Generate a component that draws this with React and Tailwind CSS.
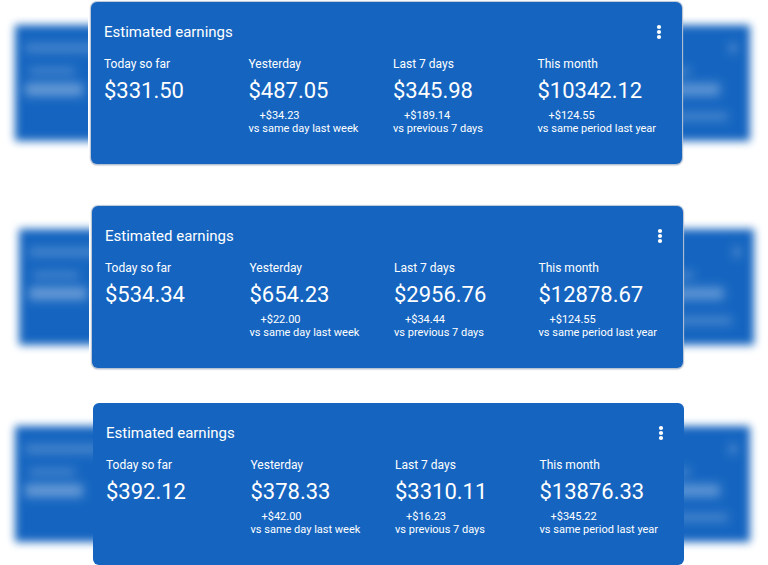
import { clsx } from "clsx";

const reports = [
  {
    id: "first",
    section: "mt-[2px] pl-[91px] pr-[86px]",
    backdrop: "left-[15px] right-[18px]",
    edge: true,
    stats: [
      { label: "Today so far", amount: "$331.50" },
      { label: "Yesterday", amount: "$487.05", change: "+$34.23", note: "vs same day last week" },
      { label: "Last 7 days", amount: "$345.98", change: "+$189.14", note: "vs previous 7 days" },
      { label: "This month", amount: "$10342.12", change: "+$124.55", note: "vs same period last year" },
    ],
  },
  {
    id: "second",
    section: "mt-[42px] pl-[92px] pr-[85px]",
    backdrop: "left-[19px] right-[14px]",
    edge: true,
    stats: [
      { label: "Today so far", amount: "$534.34" },
      { label: "Yesterday", amount: "$654.23", change: "+$22.00", note: "vs same day last week" },
      { label: "Last 7 days", amount: "$2956.76", change: "+$34.44", note: "vs previous 7 days" },
      { label: "This month", amount: "$12878.67", change: "+$124.55", note: "vs same period last year" },
    ],
  },
  {
    id: "third",
    section: "mt-[35px] pl-[93px] pr-[84px]",
    backdrop: "left-[15px] right-[18px]",
    edge: false,
    stats: [
      { label: "Today so far", amount: "$392.12" },
      { label: "Yesterday", amount: "$378.33", change: "+$42.00", note: "vs same day last week" },
      { label: "Last 7 days", amount: "$3310.11", change: "+$16.23", note: "vs previous 7 days" },
      { label: "This month", amount: "$13876.33", change: "+$345.22", note: "vs same period last year" },
    ],
  },
];

function Backdrop({ className }) {
  return (
    <div
      aria-hidden="true"
      className={clsx("absolute top-[23px] bottom-[23px] flex justify-between bg-[#1565c0] blur-[4px]", className)}
    >
      <div className="flex flex-col items-start pt-[18px] pl-[10px] blur-[2px]">
        <div className="h-[10px] w-[90px] bg-white/20" />
        <div className="mt-[14px] ml-1 h-[8px] w-[46px] bg-white/20" />
        <div className="mt-2 h-[13px] w-[58px] bg-white/35" />
      </div>
      <div className="flex flex-col items-end pt-[18px] pr-[22px] blur-[2px]">
        <div className="-mr-2 h-[10px] w-[6px] bg-white/30" />
        <div className="mt-[14px] mr-[38px] h-[8px] w-[40px] bg-white/20" />
        <div className="mt-2 mr-[8px] h-[13px] w-[70px] bg-white/30" />
        <div className="mt-4 h-[9px] w-[100px] bg-white/20" />
      </div>
    </div>
  );
}

function Stat({ label, amount, change, note }) {
  return (
    <div className="min-w-0">
      <dt className="text-[12px] leading-4">{label}</dt>
      <dd className="mt-[5px] text-[22px] leading-7">{amount}</dd>
      {change && (
        <dd className="mt-1 text-[11px] leading-[13px] whitespace-nowrap">
          <span className="block pl-[11px]">{change}</span>
          <span className="block">{note}</span>
        </dd>
      )}
    </div>
  );
}

function EarningsCard({ report }) {
  return (
    <section aria-labelledby={report.id} className={clsx("relative", report.section)}>
      <Backdrop className={report.backdrop} />
      <div
        className={clsx(
          "relative rounded-md bg-[#1565c0] pt-5 pb-[29px] pl-[13px] text-white",
          report.edge && "shadow-[0_0_1px_1px_#b9c5d6,0_1px_2px_0px_#8e99a8,-3px_0_0_0_#ffffff]"
        )}
      >
        <header className="flex items-center justify-between pr-[13px]">
          <h2 id={report.id} className="text-[15px] leading-5">
            Estimated earnings
          </h2>
          <button type="button" aria-label="More options" className="flex h-5 w-5 items-center justify-center">
            <svg viewBox="0 0 20 20" className="h-5 w-5" fill="currentColor">
              <circle cx="10" cy="5" r="2.1" />
              <circle cx="10" cy="10" r="2.1" />
              <circle cx="10" cy="15" r="2.1" />
            </svg>
          </button>
        </header>
        <dl className="mt-[14px] grid grid-cols-4">
          {report.stats.map((stat) => (
            <Stat key={stat.label} {...stat} />
          ))}
        </dl>
      </div>
    </section>
  );
}

export default function App() {
  return (
    <main className="flow-root overflow-hidden bg-white font-['Roboto',sans-serif]">
      {reports.map((report) => (
        <EarningsCard key={report.id} report={report} />
      ))}
    </main>
  );
}
